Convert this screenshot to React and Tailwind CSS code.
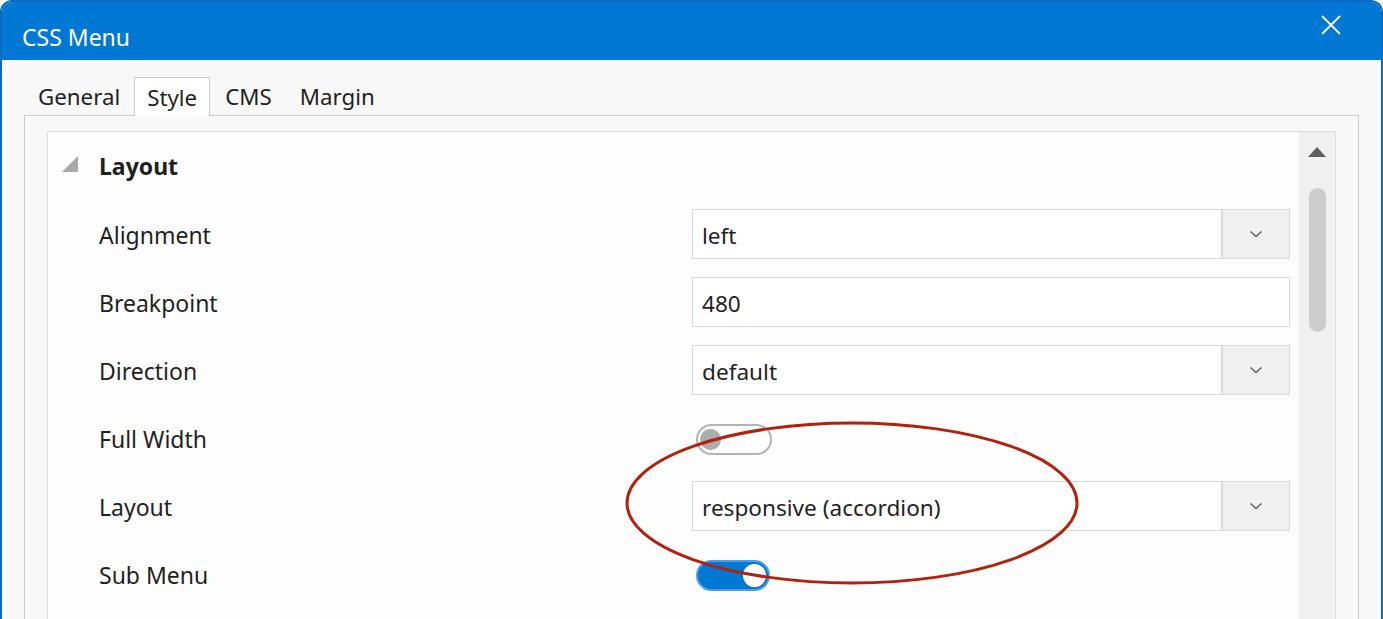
// CSS Menu property dialog

const FONT = { fontFamily: '"Noto Sans", "Open Sans", sans-serif' }

const ROWS = [
  { label: 'Alignment', type: 'select', value: 'left' },
  { label: 'Breakpoint', type: 'text', value: '480' },
  { label: 'Direction', type: 'select', value: 'default' },
  { label: 'Full Width', type: 'toggle', on: false },
  { label: 'Layout', type: 'select', value: 'responsive (accordion)' },
  { label: 'Sub Menu', type: 'toggle', on: true },
]

function Chevron() {
  return (
    <svg width="14" height="8" viewBox="0 0 14 8" fill="none">
      <path d="M1.5 1.5 L7 6.5 L12.5 1.5" stroke="#666" strokeWidth="1.6" />
    </svg>
  )
}

function Toggle({ on }) {
  if (on) {
    return (
      <div className="w-[74px] h-[31px] rounded-full bg-[#0078d4] border-2 border-[#4aa0e4] flex items-center justify-end pr-[2px]">
        <div className="w-[23px] h-[23px] rounded-full bg-white" />
      </div>
    )
  }
  return (
    <div className="w-[76px] h-[31px] rounded-full bg-white border-2 border-[#b4b4b4] flex items-center pl-[2px]">
      <div className="w-[21px] h-[21px] rounded-full bg-[#acacac]" />
    </div>
  )
}

function Field({ row }) {
  if (row.type === 'toggle') return <div className="pl-[4px] pt-[3px]"><Toggle on={row.on} /></div>
  return (
    <div className="flex h-[50px]">
      <div className="flex-1 border border-[#dadada] bg-white flex items-center pl-[9px] pt-[3px] text-[22.6px] text-[#1f1f1f]">
        {row.value}
      </div>
      {row.type === 'select' && (
        <div className="w-[68px] border border-[#dadada] bg-[#f0f0f0] flex items-center justify-center">
          <Chevron />
        </div>
      )}
    </div>
  )
}

export default function App() {
  return (
    <div className="w-[1383px] h-[619px] overflow-hidden bg-white relative" style={FONT}>
      <div className="h-full flex flex-col rounded-t-[12px] border-2 border-b-0 border-[#0a6ac0] bg-[#f8f8f8] overflow-hidden">

        {/* ── Title bar ── */}
        <div className="h-[58px] shrink-0 bg-[#0078d4] flex items-start justify-between pl-[20px] pr-[40px]">
          <span className="text-white text-[23px] mt-[24px] leading-none">CSS Menu</span>
          <svg width="20" height="20" viewBox="0 0 20 20" className="mt-[13px]">
            <path d="M1 1 L19 19 M19 1 L1 19" stroke="white" strokeWidth="1.8" />
          </svg>
        </div>

        {/* ── Tabs ── */}
        <div className="flex items-end pl-[22px] pt-[17px] text-[22.3px] text-[#1f1f1f]">
          <div className="h-[38px] px-[14px] pt-[2px] flex items-center">General</div>
          <div className="h-[39px] px-[12px] pt-[2px] flex items-center bg-white border border-b-0 border-[#cccccc] -mb-px relative z-10">Style</div>
          <div className="h-[38px] px-[15px] pt-[2px] flex items-center">CMS</div>
          <div className="h-[38px] px-[13px] pt-[2px] flex items-center">Margin</div>
        </div>

        {/* ── Tab panel ── */}
        <div className="flex-1 mx-[22px] border border-b-0 border-[#cccccc] pt-[15px] px-[22px] flex flex-col">
          <div className="flex-1 border border-b-0 border-[#dedede] bg-[#fdfdfd] flex">
            <div className="flex-1 pr-[9px]">
              <div className="h-[68px] flex items-center">
                <svg width="16" height="16" viewBox="0 0 16 16" className="ml-[14px] mr-[21px] mt-[-4px]">
                  <path d="M16 0 L16 16 L0 16 Z" fill="#a9a9a9" />
                </svg>
                <span className="text-[23px] font-bold text-[#1f1f1f]">Layout</span>
              </div>
              {ROWS.map((row) => (
                <div key={row.label} className="h-[68px] flex items-center">
                  <div className="w-[644px] pl-[51px] pt-[3px] text-[23px] text-[#1f1f1f]">{row.label}</div>
                  <div className="flex-1">
                    <Field row={row} />
                  </div>
                </div>
              ))}
            </div>

            {/* ── Scrollbar ── */}
            <div className="w-[36px] bg-[#f0f0f0] flex flex-col items-center pt-[15px]">
              <svg width="18" height="10" viewBox="0 0 18 10">
                <path d="M9 0 L18 10 L0 10 Z" fill="#606060" />
              </svg>
              <div className="mt-[31px] w-[17px] h-[144px] rounded-full bg-[#cdcdcd]" />
            </div>
          </div>
        </div>
      </div>

      {/* ── Annotation ellipse ── */}
      <svg className="absolute left-[624px] top-[420px] pointer-events-none" width="456" height="167" viewBox="0 0 456 167">
        <ellipse cx="228" cy="83" rx="225" ry="80" fill="none" stroke="#b4200e" strokeWidth="3" />
      </svg>
    </div>
  )
}
